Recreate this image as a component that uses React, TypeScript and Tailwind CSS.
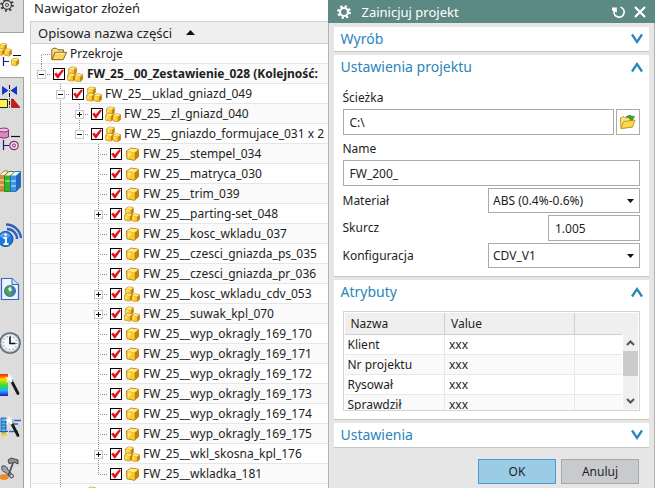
import { useState } from "react";
import type { ReactNode } from "react";

type Guide = "none" | "full" | "tee" | "end" | "start";
type TreeIcon = "folder" | "asm" | "part";

interface TreeNode {
  name: string;
  icon: TreeIcon;
  guides: Guide[];
  expander?: "plus" | "minus";
  bold?: boolean;
}

const leaf = (name: string): TreeNode => ({ name, icon: "part", guides: ["none", "full", "none", "tee"] });
const closedAsm = (name: string): TreeNode => ({ ...leaf(name), icon: "asm", expander: "plus" });

const nodes: TreeNode[] = [
  { name: "Przekroje", icon: "folder", guides: ["start"] },
  { name: "FW_25__00_Zestawienie_028 (Kolejność:", icon: "asm", guides: ["end"], expander: "minus", bold: true },
  { name: "FW_25__uklad_gniazd_049", icon: "asm", guides: ["none", "tee"], expander: "minus" },
  { name: "FW_25__zl_gniazd_040", icon: "asm", guides: ["none", "full", "tee"], expander: "plus" },
  { name: "FW_25__gniazdo_formujace_031 x 2", icon: "asm", guides: ["none", "full", "end"], expander: "minus" },
  leaf("FW_25__stempel_034"),
  leaf("FW_25__matryca_030"),
  leaf("FW_25__trim_039"),
  closedAsm("FW_25__parting-set_048"),
  leaf("FW_25__kosc_wkladu_037"),
  leaf("FW_25__czesci_gniazda_ps_035"),
  leaf("FW_25__czesci_gniazda_pr_036"),
  closedAsm("FW_25__kosc_wkladu_cdv_053"),
  closedAsm("FW_25__suwak_kpl_070"),
  leaf("FW_25__wyp_okragly_169_170"),
  leaf("FW_25__wyp_okragly_169_171"),
  leaf("FW_25__wyp_okragly_169_172"),
  leaf("FW_25__wyp_okragly_169_173"),
  leaf("FW_25__wyp_okragly_169_174"),
  leaf("FW_25__wyp_okragly_169_175"),
  closedAsm("FW_25__wkl_skosna_kpl_176"),
  { name: "FW_25__wkladka_181", icon: "part", guides: ["none", "full", "none", "end"] },
  { name: "", icon: "asm", guides: ["none", "tee"], expander: "plus" },
];

/* ---------- tree glyphs ---------- */

function GuideCell({ kind, wide }: { kind: Guide; wide?: boolean }) {
  const y1 = kind === "start" ? 11 : 0;
  const y2 = kind === "end" ? 11 : 20;
  return (
    <svg className="col-start-1 row-start-1 h-5 w-[19px]" viewBox="0 0 19 20" shapeRendering="crispEdges" aria-hidden="true">
      {kind !== "none" && <path d={`M9.5 ${y1}V${y2}`} stroke="#909090" strokeDasharray="1 1" fill="none" />}
      {kind !== "none" && kind !== "full" && (
        <path d={wide ? "M15 10.5H19" : "M11 10.5H19"} stroke="#909090" strokeDasharray="1 1" fill="none" />
      )}
    </svg>
  );
}

function Cube({ x, y, s = 1 }: { x: number; y: number; s?: number }) {
  return (
    <g transform={`translate(${x} ${y}) scale(${s})`}>
      <path d="M0.5 3.5 5 0.5 12.3 1.8 12.5 9.3 8.5 12.8 1 11.3Z" fill="#f3b71c" stroke="#a8730c" strokeWidth="0.9" strokeLinejoin="round" />
      <path d="M1 3.6 5.1 0.9 12 2.1 8.4 4.8Z" fill="#ffe98a" />
      <path d="M1 4 8.1 5.2 8.2 12.3 1.4 10.9Z" fill="#fac72e" />
      <path d="M1.8 5 5.4 5.6 4 9 2 10Z" fill="#ffe46c" />
      <path d="M8.9 5.1 12.100 2.7 12.1 9.1 8.9 12Z" fill="#c08208" />
    </g>
  );
}

function NodeIcon({ kind }: { kind: TreeIcon }) {
  if (kind === "folder") {
    return (
      <svg className="h-4 w-4 shrink-0" viewBox="0 0 16 16" aria-hidden="true">
        <path d="M.8 13.5V3.5L2 2.3H5.6L7 3.8H12.5V6" fill="#f7df8c" stroke="#8a6410" />
        <path d="M1 13.7 4 6.3H15.6L12.2 13.7Z" fill="#fbd55e" stroke="#8a6410" strokeLinejoin="round" />
        <path d="M4.6 7.4H13.6" stroke="#fff2b5" />
      </svg>
    );
  }
  if (kind === "asm") {
    return (
      <svg className="h-4 w-4 shrink-0" viewBox="0 0 16 16" aria-hidden="true">
        <Cube x={1.2} y={0.5} s={0.66} />
        <Cube x={0.2} y={6.800} s={0.66} />
        <Cube x={7.400} y={7.400} s={0.66} />
      </svg>
    );
  }
  return (
    <svg className="h-4 w-4 shrink-0" viewBox="0 0 16 16" aria-hidden="true">
      <Cube x={2} y={1.5} />
    </svg>
  );
}

function TreeCheck({ label }: { label: string }) {
  return (
    <span className="grid h-3 w-3 shrink-0">
      <input
        type="checkbox"
        defaultChecked
        aria-label={label || "Komponent"}
        className="peer col-start-1 row-start-1 h-3 w-3 appearance-none border border-black bg-white"
      />
      <svg className="pointer-events-none invisible col-start-1 row-start-1 h-3 w-3 peer-checked:visible" viewBox="0 0 12 12" aria-hidden="true">
        <path d="M1.2 6 3.4 4.600 4.800 6.600 9.300 1.300 10.900 2.600 5.200 10.600 4.400 10.600Z" fill="#e8101c" />
      </svg>
    </span>
  );
}

function TreeRow({ node }: { node: TreeNode }) {
  const last = node.guides.length - 1;
  const [kind, setKind] = useState(node.expander);
  return (
    <li className="flex h-5 shrink-0 items-center border-b border-[#e6e6e6] bg-white pt-px pl-px even:bg-[#fafafa]">
      {node.guides.map((guide, i) => (
        <span key={i} className="grid h-5 w-[19px] shrink-0">
          <GuideCell kind={guide} wide={i === last && !!kind} />
          {i === last && kind && (
            <button
              type="button"
              aria-label={kind === "plus" ? "Rozwiń" : "Zwiń"}
              onClick={() => setKind(kind === "plus" ? "minus" : "plus")}
              className="z-10 col-start-1 row-start-1 mt-px h-[9px] w-[9px] place-self-center border border-[#c8c8c8] bg-white"
            >
              <svg className="block h-[7px] w-[7px]" viewBox="0 0 7 7" shapeRendering="crispEdges" aria-hidden="true">
                <path d={kind === "plus" ? "M1 3.5H6M3.5 1V6" : "M1 3.5H6"} stroke="#111" />
              </svg>
            </button>
          )}
        </span>
      ))}
      {node.icon === "folder" ? (
        <NodeIcon kind="folder" />
      ) : (
        <span className="flex shrink-0 items-center gap-0.5 pl-0.5">
          <TreeCheck label={node.name} />
          <NodeIcon kind={node.icon} />
        </span>
      )}
      <span className={node.bold ? "pl-1 font-bold whitespace-nowrap" : "pl-[3px] whitespace-nowrap"}>{node.name}</span>
    </li>
  );
}

/* ---------- resource bar ---------- */

function BarButton({ label, children }: { label: string; children: ReactNode }) {
  return (
    <button type="button" aria-label={label} className="block h-6 w-[23px]">
      <svg className="h-6 w-[23px]" viewBox="0 0 23 24" aria-hidden="true">
        {children}
      </svg>
    </button>
  );
}

function Wand() {
  return (
    <>
      <path d="M10.500 6 18 20.500" stroke="#1a1a1a" strokeWidth="2.800" strokeLinecap="round" />
      <path d="M9.500 4.500 11.800 8.800" stroke="#fff" strokeWidth="2.600" />
      <path d="M9 0 10 4 13 1.500 11 5 15 5.500 11 6.500 12 10 9 7 6 10 7.500 6 4 5 8 4Z" fill="#fff" />
    </>
  );
}

function ResourceBar() {
  return (
    <nav aria-label="Pasek zasobów" className="flex w-6 shrink-0 flex-col bg-[#dcdcdc]">
      <div className="h-[33px] border-r border-b border-[#a0a0a0]">
        <button type="button" aria-label="Opcje" className="block h-4 w-[23px]">
          <svg className="h-4 w-[23px]" viewBox="0 0 23 16" fill="none" aria-hidden="true">
            <circle cx="7" cy="5" r="5.800" stroke="#333" strokeWidth="2" strokeDasharray="1.800 2.755" />
            <circle cx="7" cy="5" r="4.400" fill="#e4e4e4" stroke="#333" strokeWidth="1.200" />
            <circle cx="7" cy="5" r="1.600" fill="#dcdcdc" stroke="#444" strokeWidth="0.900" />
          </svg>
        </button>
      </div>
      <div className="flex h-11 items-center bg-white">
        <BarButton label="Nawigator złożeń">
          <Cube x={-0.500} y={0} s={0.56} />
          <Cube x={-3} y={5} s={0.58} />
          <Cube x={4} y={5.500} s={0.6} />
          <path d="M13 12.500H21" stroke="#111" />
          <path d="M3.500 14V23M3.500 18.500H9" stroke="#1c1c8c" strokeWidth="1.200" />
          <Cube x={11} y={15} s={0.62} />
        </BarButton>
      </div>
      <div className="flex flex-1 flex-col border-t border-r border-[#a0a0a0] pt-[7px]">
        <div className="flex flex-col gap-[18px]">
          <BarButton label="Nawigator wiązań">
            <path d="M9.500 0V23" stroke="#111" strokeDasharray="4 1.500 1 1.500" />
            <path d="M2 1 8.500 5.500 2 10ZM17 1 10.500 5.500 17 10Z" fill="#1238c8" />
            <path d="M-1 14.500H7.500V22.500H-1Z" fill="#fff24a" stroke="#222" />
            <path d="M11.500 14H13L20 22.500H11.500Z" fill="#d01818" stroke="#7a0c0c" strokeWidth="0.600" />
          </BarButton>
          <BarButton label="Nawigator części">
            <path d="M-1 3V10Q4 12.500 8.500 10V3Z" fill="#d58ac2" stroke="#8c2d74" />
            <ellipse cx="3.800" cy="3" rx="4.700" ry="2" fill="#efc4e4" stroke="#8c2d74" />
            <path d="M11 9.500H20" stroke="#111" strokeWidth="1.200" />
            <path d="M3.500 13V23M3.500 18.500H9" stroke="#1c1c8c" strokeWidth="1.200" />
            <circle cx="14" cy="18.500" r="4.200" fill="#f6e4f2" stroke="#8c2d74" strokeWidth="1.200" />
            <circle cx="14" cy="18.500" r="1.600" fill="#dcdcdc" stroke="#8c2d74" />
          </BarButton>
          <BarButton label="Biblioteka">
            <path d="M-1 7 4 2H8V18L4 22H-1Z" fill="#d98a32" stroke="#8c5210" strokeWidth="0.700" />
            <path d="M4.500 7 9 2.500H14V18L10 22.500H4.500Z" fill="#2db52b" stroke="#157015" strokeWidth="0.700" />
            <path d="M10.500 7 15 2.500H20.500V18L16 22.500H10.500Z" fill="#3a94e8" stroke="#1c559c" strokeWidth="0.700" />
            <path d="M16 7 20.500 2.500V18L16 22.500Z" fill="#1e68c0" />
            <path d="M0 6 4 2.500H8L4 6ZM5 6.500 9 3H14L10 6.500ZM11 6.500 15 3H20L16 6.500Z" fill="#f7f7ea" />
            <path d="M0 11H4M0 16H4M5 12H10M11 12H16M11 17H16" stroke="#eaf6ff" strokeWidth="0.900" />
          </BarButton>
        </div>
        <div className="flex flex-col gap-[30px] pt-[30px]">
          <BarButton label="Informacje">
            <path d="M7 6A10 10 0 0 1 17 16M6 1.500A15 15 0 0 1 21 15" fill="none" stroke="#2c5fc0" strokeWidth="2.400" />
            <circle cx="5.500" cy="16" r="7.500" fill="#1d78dc" stroke="#0d4a9c" />
            <ellipse cx="5" cy="12.500" rx="5" ry="3" fill="#7dbcf4" opacity="0.600" />
            <path d="M3.500 15H6V21M3.500 21H8.500" fill="none" stroke="#fff" strokeWidth="2" />
            <circle cx="5.600" cy="11.600" r="1.400" fill="#fff" />
          </BarButton>
          <BarButton label="Strona internetowa">
            <path d="M1.500 1.500H12L18.500 7.500V22.500H1.500Z" fill="#eef4ff" stroke="#3566c4" strokeWidth="1.200" />
            <path d="M12 1.500V7.500H18.500" fill="#cfe0ff" stroke="#3566c4" />
            <circle cx="10" cy="14" r="5.600" fill="#3c7ec4" stroke="#2c4a80" strokeWidth="0.600" />
            <path d="M6 12Q8 8 11 9L13 12 10 14 13 18Q9 20 7 17L5 14Z" fill="#3fae3a" />
            <path d="M8 12 10 9.500 12 13 10 15Z" fill="#e8f6ea" />
          </BarButton>
          <BarButton label="Historia">
            <circle cx="10" cy="12" r="10.800" fill="#5c6670" />
            <circle cx="10" cy="12" r="9.600" fill="#aab4bd" />
            <circle cx="10" cy="12" r="8.400" fill="#f2f7fb" />
            <circle cx="10" cy="12" r="6.800" fill="none" stroke="#2b4a7a" strokeDasharray="1 2.560" />
            <path d="M10 5.500V12.500H15.500" fill="none" stroke="#111" strokeWidth="1.600" />
          </BarButton>
        </div>
        <div className="flex flex-col gap-[18px] pt-[18px]">
          <BarButton label="Materiały wizualne">
            <defs>
              <linearGradient id="spectrum" x1="0" y1="0" x2="0" y2="1">
                <stop offset="0" stopColor="#ff1a00" />
                <stop offset="0.250" stopColor="#ffd800" />
                <stop offset="0.500" stopColor="#3be02c" />
                <stop offset="0.750" stopColor="#18b8f0" />
                <stop offset="1" stopColor="#2a10d8" />
              </linearGradient>
            </defs>
            <rect x="0" y="1" width="8" height="22" fill="url(#spectrum)" />
            <Wand />
          </BarButton>
          <BarButton label="Kreator">
            <path d="M9 5.500H21M11 9H18M9 16.500H18" stroke="#2c64c4" strokeWidth="1.600" />
            <path d="M1 3H6V17H1Z" fill="#58b4ea" stroke="#2468b0" />
            <path d="M1 7H6M1 10H6M1 13H6M-1 16.500H8" stroke="#1e5ca8" />
            <path d="M1 18 2.500 23 4 19.500 6 22 6.500 18Z" fill="#f0c820" />
            <Wand />
          </BarButton>
          <BarButton label="Narzędzia">
            <ellipse cx="4" cy="20" rx="5" ry="3" fill="#f08a28" />
            <path d="M2 9Q7 8 8 13L13 18Q14 21 11 21L5 15Q1 15 2 9Z" fill="#9ca4b4" stroke="#444c5a" />
            <path d="M8 3 11 1 18 3V7L15 5.500 9 6.500Z" fill="#8c9494" stroke="#3c4444" />
            <path d="M13 6 8.500 18" stroke="#4c5454" strokeWidth="1.800" />
            <circle cx="11.500" cy="19" r="1.800" fill="#dcdcdc" stroke="#444c5a" />
          </BarButton>
        </div>
      </div>
    </nav>
  );
}

/* ---------- dialog ---------- */

function Section({ title, open, children }: { title: string; open?: boolean; children?: ReactNode }) {
  return (
    <section className="border-b border-[#c6c6c6] bg-white">
      <button type="button" aria-expanded={!!open} className="flex h-6 w-full items-center justify-between pr-1.5 pl-[7px]">
        <h2 className="text-[14px] text-[#2a86ba]">{title}</h2>
        <svg className="h-3 w-3" viewBox="0 0 12 12" fill="none" aria-hidden="true">
          <path d={open ? "M1 10.500 6 3 11 10.500" : "M1 1.500 6 9 11 1.500"} stroke="#2a86ba" strokeWidth="2.300" />
        </svg>
      </button>
      {children}
    </section>
  );
}

function Choice({ id, value }: { id: string; value: string }) {
  return (
    <span className="grid w-[152px] items-center">
      <select id={id} defaultValue={value} className="col-start-1 row-start-1 h-[25px] w-full appearance-none border border-[#ababab] bg-white pr-4 pl-1">
        <option>{value}</option>
      </select>
      <svg className="pointer-events-none col-start-1 row-start-1 mr-1.5 h-1 w-[7px] justify-self-end" viewBox="0 0 7 4" aria-hidden="true">
        <path d="M0 0H7L3.500 4Z" fill="#111" />
      </svg>
    </span>
  );
}

const attributes = ["Klient", "Nr projektu", "Rysował", "Sprawdził"];

function AttributeTable() {
  return (
    <div className="relative h-[100px] overflow-hidden border border-[#d4d4d4] bg-white p-px">
      <table className="w-full table-fixed border-collapse text-left">
        <thead>
          <tr className="h-[21px] border-b border-[#cfcfcf] bg-[#efefef]">
            <th className="w-[100px] border-r border-[#cfcfcf] pt-0.5 pb-0 pl-1.5 font-normal">Nazwa</th>
            <th className="w-[130px] border-r border-[#cfcfcf] pt-0.5 pb-0 pl-1.5 font-normal">Value</th>
            <th aria-label="Opcje" />
          </tr>
        </thead>
        <tbody>
          {attributes.map((name) => (
            <tr key={name} className="h-5 border-b border-[#e8e8e8] even:bg-[#fafafa]">
              <td className="border-r border-[#e8e8e8] pt-0.5 pb-0 pl-[3px]">{name}</td>
              <td className="border-r border-[#e8e8e8] pt-0.5 pb-0 pl-1">xxx</td>
              <td />
            </tr>
          ))}
        </tbody>
      </table>
      <div className="absolute top-[22px] right-px bottom-px flex w-4 flex-col border-l border-white bg-[#f0f0f0]">
        <svg className="h-[17px] w-[15px]" viewBox="0 0 15 17" fill="none" aria-hidden="true">
          <path d="M4 11 7.500 7.500 11 11" stroke="#555" strokeWidth="2" />
        </svg>
        <div className="h-[25px] bg-[#cbcbcb]" />
        <svg className="mt-auto h-[17px] w-[15px]" viewBox="0 0 15 17" fill="none" aria-hidden="true">
          <path d="M4 7 7.500 10.500 11 7" stroke="#555" strokeWidth="2" />
        </svg>
      </div>
    </div>
  );
}

function ProjectDialog() {
  return (
    <form
      role="dialog"
      aria-label="Zainicjuj projekt"
      onSubmit={(e) => e.preventDefault()}
      className="flex w-1/2 shrink-0 flex-col bg-[#e6e6e6]"
    >
      <header className="flex h-[23px] items-center bg-[#5c8983] pr-[9px] pl-[9px] text-white">
        <svg className="h-[14px] w-[14px]" viewBox="0 0 14 14" fill="none" aria-hidden="true">
          <circle cx="7" cy="7" r="5.700" stroke="#fff" strokeWidth="2.400" strokeDasharray="2.238 2.238" />
          <circle cx="7" cy="7" r="4" stroke="#fff" strokeWidth="2.200" />
        </svg>
        <h1 className="flex-1 pl-[11px] text-[13px]">Zainicjuj projekt</h1>
        <button type="button" aria-label="Resetuj">
          <svg className="h-3 w-[13px]" viewBox="0 0 13 12" fill="none" aria-hidden="true">
            <path d="M8.500 1.300A5 5 0 1 1 2.200 5" stroke="#fff" strokeWidth="1.700" />
            <path d="M0 4.500V1.500H4.800V6.500Z" fill="#fff" />
          </svg>
        </button>
        <button type="button" aria-label="Zamknij" className="pl-[9px]">
          <svg className="h-3 w-3" viewBox="0 0 12 12" fill="none" aria-hidden="true">
            <path d="M1 1 11 11M11 1 1 11" stroke="#fff" strokeWidth="2.200" />
          </svg>
        </button>
      </header>

      <div className="flex flex-1 flex-col border-x border-[#b4b4b4] px-[5px] pt-1">
        <div className="flex flex-col gap-[3px]">
          <Section title="Wyrób" />
          <Section title="Ustawienia projektu" open>
            <div className="flex flex-col gap-0.5 px-[9px] pt-2 pb-2">
              <div>
                <label htmlFor="path" className="flex h-[22px] items-center">Ścieżka</label>
                <div className="flex gap-0.5">
                  <input id="path" defaultValue="C:\" className="h-[26px] w-0 flex-1 border border-[#ababab] px-1.5" />
                  <button type="button" aria-label="Przeglądaj" className="flex h-[26px] w-6 items-center justify-center border border-[#ababab]">
                    <svg className="h-4 w-[18px]" viewBox="0 0 18 16" aria-hidden="true">
                      <path d="M2 14.500 1.500 4 5 2.500 6.500 4 11 3.500 14 6 13 13Z" fill="#fbe68a" stroke="#c9981c" />
                      <path d="M2 14.500 4.500 7.500 16 6 13.500 13Z" fill="#fdd94c" stroke="#c9981c" strokeLinejoin="round" />
                      <path d="M7 3Q10.500 0 13 2.200L15.500 2.500 13 6.500 10 4.500 11.300 4Q9.500 2.600 7 3Z" fill="#3fae35" stroke="#25701f" strokeWidth="0.600" />
                    </svg>
                  </button>
                </div>
              </div>
              <div>
                <label htmlFor="name" className="flex h-[23px] items-center">Name</label>
                <input id="name" defaultValue="FW_200_" className="block h-[26px] w-full border border-[#ababab] px-1.5" />
              </div>
              <div className="flex items-center justify-between">
                <label htmlFor="material">Materiał</label>
                <Choice id="material" value="ABS (0.4%-0.6%)" />
              </div>
              <div className="flex items-center justify-between">
                <label htmlFor="shrink">Skurcz</label>
                <input id="shrink" defaultValue="1.005" className="h-[26px] w-[92px] border border-[#ababab] px-1.5" />
              </div>
              <div className="flex items-center justify-between">
                <label htmlFor="config">Konfiguracja</label>
                <Choice id="config" value="CDV_V1" />
              </div>
            </div>
          </Section>
          <Section title="Atrybuty" open>
            <div className="px-[9px] pt-[7px] pb-2">
              <AttributeTable />
            </div>
          </Section>
          <Section title="Ustawienia" />
        </div>
        <footer className="flex justify-end gap-[5px] pt-[11px] pr-2.5">
          <button type="submit" className="h-[25px] w-[78px] border border-[#4a9cd0] bg-[#9bcce6]">OK</button>
          <button type="button" className="h-[25px] w-[78px] border border-[#a9a9a9] bg-[#c9cace]">Anuluj</button>
        </footer>
      </div>
    </form>
  );
}

export default function App() {
  return (
    <div className="flex h-screen overflow-hidden bg-white font-['Noto_Sans','Open_Sans',sans-serif] text-[12px] leading-4 text-[#1e1e1e]">
      <ResourceBar />
      <main className="flex w-0 flex-1 flex-col overflow-hidden pl-1.5">
        <h1 className="h-[21px] shrink-0 pl-1 text-[13px]">Nawigator złożeń</h1>
        <div className="flex flex-1 flex-col overflow-hidden border-t border-l border-[#cfcfcf]">
          <button type="button" className="flex h-[22px] shrink-0 items-center gap-[14px] border-b border-[#cfcfcf] bg-[#efefef] pl-[7px] text-left text-[13px]">
            Opisowa nazwa części
            <svg className="h-[5px] w-[9px]" viewBox="0 0 9 5" aria-hidden="true">
              <path d="M0 5 4.500 0 9 5Z" fill="#111" />
            </svg>
          </button>
          <ul className="flex flex-col overflow-hidden">
            {nodes.map((node, i) => (
              <TreeRow key={i} node={node} />
            ))}
          </ul>
        </div>
      </main>
      <ProjectDialog />
    </div>
  );
}
